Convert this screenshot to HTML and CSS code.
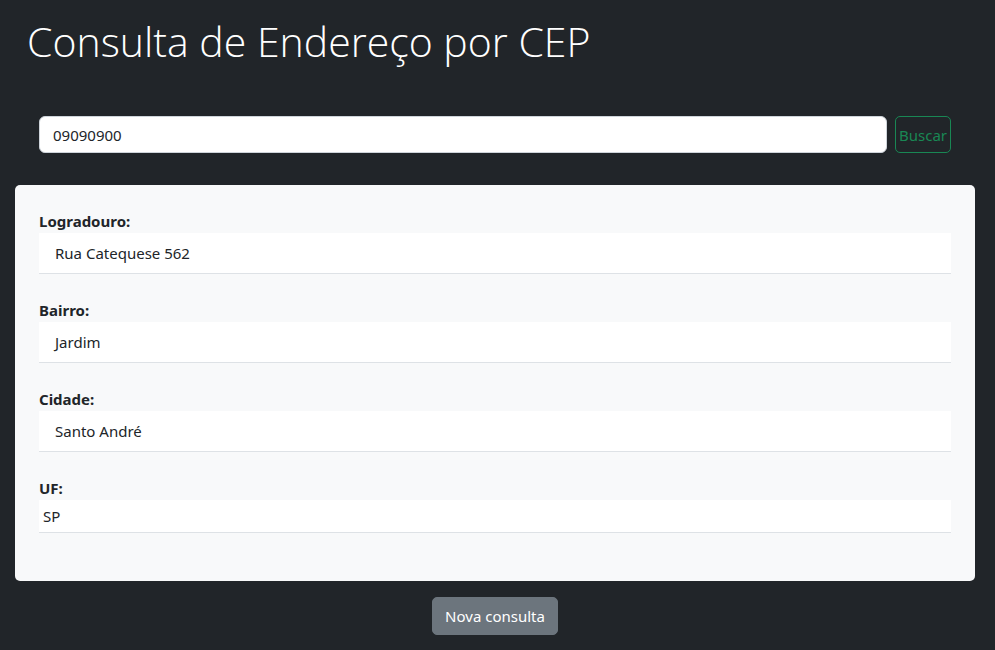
FILE: index.html
```html
<!DOCTYPE html>
<html lang="pt-BR">
<head>
<meta charset="utf-8">
<title>Consulta de Endereço por CEP</title>
<link rel="stylesheet" href="styles.css">
</head>
<body>
<div class="container">
  <h1 class="title">Consulta de Endereço por CEP</h1>
  <form class="search">
    <input class="cep-input" type="text" value="09090900">
    <button class="btn-buscar" type="button">Buscar</button>
  </form>
  <div class="card">
    <div class="label">Logradouro:</div>
    <div class="field">Rua Catequese 562</div>
    <div class="label">Bairro:</div>
    <div class="field">Jardim</div>
    <div class="label">Cidade:</div>
    <div class="field">Santo André</div>
    <div class="label">UF:</div>
    <div class="field field-sm">SP</div>
  </div>
  <div class="actions">
    <button class="btn-nova" type="button">Nova consulta</button>
  </div>
</div>
</body>
</html>
```
FILE: styles.css
```css
* { box-sizing: border-box; }
html, body { margin: 0; padding: 0; }
body {
  background: #212529;
  color: #212529;
  font-family: "Noto Sans", "Open Sans", sans-serif;
  font-size: 15px;
  line-height: 24px;
}
.container {
  width: 960px;
  margin-left: 15px;
}
.title {
  margin: 0;
  padding: 17px 12px 0;
  font-family: "Open Sans", sans-serif;
  font-weight: 300;
  font-size: 41px;
  line-height: 1.2;
  color: #fff;
}
.search {
  display: flex;
  gap: 8px;
  padding: 0 24px;
  margin: 50px 0 32px;
}
.cep-input {
  flex: 1;
  height: 37px;
  padding: 6px 13px;
  font: inherit;
  color: #212529;
  background: #fff;
  border: 1px solid #ced4da;
  border-radius: 6px;
  outline: none;
}
.btn-buscar {
  width: 56px;
  height: 37px;
  padding: 0;
  font: inherit;
  color: #198754;
  background: transparent;
  border: 1px solid #198754;
  border-radius: 5px;
}
.card {
  background: #f8f9fa;
  border-radius: 5px;
  padding: 24px 24px 24px;
}
.label {
  font-weight: 700;
  line-height: 24px;
}
.field {
  background: #fff;
  border-bottom: 1px solid #dee2e6;
  padding: 8px 16px;
  margin-bottom: 24px;
}
.field-sm {
  padding: 4px 4px;
  margin-bottom: 24px;
}
.actions {
  display: flex;
  justify-content: center;
  padding-top: 16px;
}
.btn-nova {
  width: 126px;
  height: 38px;
  padding: 0;
  font: inherit;
  color: #fff;
  background: #6c757d;
  border: 1px solid #6c757d;
  border-radius: 5px;
}
```
